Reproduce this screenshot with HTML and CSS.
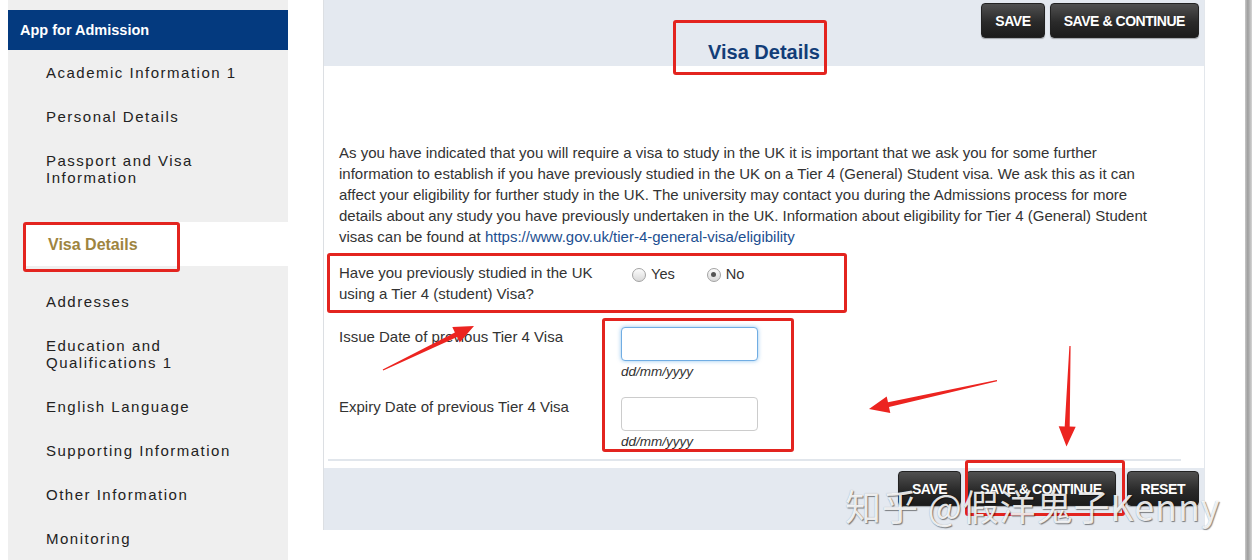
FILE: index.html
```html
<!DOCTYPE html>
<html lang="en">
  <head>
    <meta charset="UTF-8" />
    <meta name="viewport" content="width=device-width, initial-scale=1.0" />
    <title>Visa Details</title>
    <link rel="stylesheet" href="styles.css">
  </head>
  <body>
    <div class="page">
      <aside class="sidebar">
        <div class="sidebar-title">App for Admission</div>
        <ul class="nav">
          <li class="nav-item">Academic Information 1</li>
          <li class="nav-item">Personal Details</li>
          <li class="nav-item">Passport and Visa<br />Information</li>
          <li class="nav-item active">Visa Details</li>
          <li class="nav-item">Addresses</li>
          <li class="nav-item">Education and<br />Qualifications 1</li>
          <li class="nav-item">English Language</li>
          <li class="nav-item">Supporting Information</li>
          <li class="nav-item">Other Information</li>
          <li class="nav-item">Monitoring</li>
        </ul>
      </aside>

      <main class="panel">
        <div class="panel-head">
          <div class="actions">
            <button class="btn">SAVE</button>
            <button class="btn">SAVE &amp; CONTINUE</button>
          </div>
          <h1 class="panel-title">Visa Details</h1>
        </div>

        <div class="panel-body">
          <p class="intro">
            As you have indicated that you will require a visa to study in the UK it is important that we ask you for some further
            information to establish if you have previously studied in the UK on a Tier 4 (General) Student visa. We ask this as it can
            affect your eligibility for further study in the UK. The university may contact you during the Admissions process for more
            details about any study you have previously undertaken in the UK. Information about eligibility for Tier 4 (General) Student
            visas can be found at <a class="link" href="#">https://www.gov.uk/tier-4-general-visa/eligibility</a>
          </p>

          <div class="form-row question">
            <label class="form-label">Have you previously studied in the UK<br />using a Tier 4 (student) Visa?</label>
            <div class="radios">
              <span class="radio-opt"><span class="radio"></span>Yes</span>
              <span class="radio-opt"><span class="radio checked"></span>No</span>
            </div>
          </div>

          <div class="form-row">
            <label class="form-label">Issue Date of previous Tier 4 Visa</label>
            <div class="field">
              <input class="date-input focused" type="text" />
              <div class="hint">dd/mm/yyyy</div>
            </div>
          </div>

          <div class="form-row gap">
            <label class="form-label">Expiry Date of previous Tier 4 Visa</label>
            <div class="field">
              <input class="date-input" type="text" />
              <div class="hint">dd/mm/yyyy</div>
            </div>
          </div>

          <div class="rule"></div>
        </div>

        <div class="panel-foot">
          <button class="btn">SAVE</button>
          <button class="btn">SAVE &amp; CONTINUE</button>
          <button class="btn reset">RESET</button>
        </div>
      </main>

      <div class="edge"></div>
    </div>

    <!-- annotations drawn over the screenshot -->
    <div class="mark mark-nav"></div>
    <div class="mark mark-title"></div>
    <div class="mark mark-question"></div>
    <div class="mark mark-dates"></div>
    <div class="mark mark-continue"></div>

    <svg class="arrows" width="1252" height="560" viewBox="0 0 1252 560">
      <polygon points="383.3,370.5 457.1,337 459.7,342.4 474,326 452.3,327 454.9,332.5 382.7,369.5" />
      <polygon points="996.9,380.1 888,402.3 886.7,396.4 869,409 890.3,413 889,407.1 997.1,381.3" />
      <polygon points="1069.4,346 1064.7,426.4 1058.7,426.2 1066.5,446.5 1075.7,426.8 1069.7,426.6 1070.6,346" />
    </svg>

    <div class="watermark">知乎 @假洋鬼子Kenny</div>
  </body>
</html>
```

FILE: styles.css
```css
body {
  margin: 0;
  width: 1252px;
  height: 560px;
  overflow: hidden;
  position: relative;
  background: #fff;
  font-family: "Liberation Sans", Arial, sans-serif;
  color: #333;
}
.page {
  display: flex;
  align-items: flex-start;
  height: 560px;
}

/* sidebar */
.sidebar {
  margin-left: 8px;
  width: 280px;
  height: 560px;
  background: #efefef;
  padding-top: 10px;
  box-sizing: border-box;
}
.sidebar-title {
  height: 40px;
  line-height: 40px;
  padding-left: 12px;
  background: #043a7f;
  color: #fff;
  font-weight: bold;
  font-size: 14.5px;
}
.nav {
  list-style: none;
  margin: 0;
  padding: 0;
}
.nav-item {
  padding: 13.5px 0 13.5px 38px;
  line-height: 17px;
  font-size: 15px;
  letter-spacing: 1.5px;
  color: #222;
}
.nav-item.active {
  margin: 23px 0 13px 17px;
  padding-left: 23px;
  background: #fff;
  color: #9e8440;
  font-weight: bold;
  font-size: 16px;
  letter-spacing: 0;
}

/* main panel */
.panel {
  margin-left: 35px;
  width: 882px;
  border-left: 1px solid #dcdfe3;
  border-right: 1px solid #e3e7ec;
  box-sizing: border-box;
}
.panel-head {
  height: 66px;
  background: #e4e9f0;
  padding-top: 3px;
  box-sizing: border-box;
}
.actions {
  display: flex;
  justify-content: flex-end;
  gap: 5px;
  padding-right: 5px;
}
.panel-title {
  margin: 2px 0 0;
  text-align: center;
  font-size: 20px;
  line-height: 24px;
  color: #123d78;
}
.btn {
  height: 35px;
  padding: 0 13px;
  border: 1px solid #222;
  border-radius: 4px;
  background: linear-gradient(#505050, #2a2a2a 55%, #1b1b1b);
  color: #fff;
  font-family: "Liberation Sans", Arial, sans-serif;
  font-weight: bold;
  font-size: 14px;
  letter-spacing: -0.45px;
  box-shadow: 0 1px 1px rgba(0, 0, 0, 0.3);
}

.panel-body {
  background: #fff;
  padding: 76px 15px 7px;
}
.intro {
  margin: 0;
  width: 815px;
  font-size: 15px;
  line-height: 21px;
}
.link {
  color: #1d4f91;
  text-decoration: none;
}
.form-row {
  display: grid;
  grid-template-columns: 282px 1fr;
  align-items: start;
  margin-top: 22px;
}
.form-row.question {
  margin-top: 15px;
}
.form-row.gap {
  margin-top: 16px;
}
.form-label {
  font-size: 15px;
  line-height: 21px;
}
.radios {
  display: flex;
  gap: 32px;
  padding-left: 11px;
  margin-top: 5px;
  font-size: 14.6px;
  line-height: 15px;
}
.radio-opt {
  display: flex;
  align-items: center;
  gap: 5px;
}
.radio {
  width: 12px;
  height: 12px;
  border-radius: 50%;
  border: 1px solid #a3a3a3;
  background: linear-gradient(#fcfcfc, #d9d9d9);
  position: relative;
}
.radio.checked::after {
  content: "";
  position: absolute;
  left: 3.5px;
  top: 3.5px;
  width: 5px;
  height: 5px;
  border-radius: 50%;
  background: #555;
}
.field {
  padding-top: 1px;
}
.date-input {
  display: block;
  width: 137px;
  height: 34px;
  box-sizing: border-box;
  border: 1px solid #cccccc;
  border-radius: 4px;
  background: #fff;
  outline: none;
}
.date-input.focused {
  border-color: #71ade3;
  box-shadow: 0 0 4px rgba(102, 175, 233, 0.7);
}
.hint {
  margin-top: 3px;
  font-size: 13.5px;
  line-height: 16px;
  font-style: italic;
}
.rule {
  margin: 9px 0 0 -11px;
  width: 853px;
  height: 2px;
  background: #e1e6ec;
}

.panel-foot {
  height: 62px;
  background: #e4e9f0;
  display: flex;
  justify-content: flex-end;
  align-items: flex-start;
  gap: 5px;
  padding: 3px 5px 0 0;
  box-sizing: border-box;
}
.btn.reset {
  margin-left: 6px;
}

.edge {
  margin-left: auto;
  width: 7px;
  height: 560px;
  background: linear-gradient(to right, #c9c9c9, #9d9d9d 40%, #d6d6d6);
}

/* annotation layer */
.mark {
  position: absolute;
  border: 3px solid #e3241f;
  border-radius: 3px;
  box-sizing: border-box;
}
.mark-nav { left: 23px; top: 222px; width: 157px; height: 50px; }
.mark-title { left: 673px; top: 20px; width: 154px; height: 55px; }
.mark-question { left: 327px; top: 253px; width: 520px; height: 60px; }
.mark-dates { left: 602px; top: 318px; width: 192px; height: 134px; }
.mark-continue { left: 965px; top: 460px; width: 160px; height: 56px; }
.arrows {
  position: absolute;
  left: 0;
  top: 0;
  fill: #ec2420;
}
.watermark {
  position: absolute;
  left: 845px;
  top: 482px;
  font-family: "Noto Sans CJK SC", "Liberation Sans", sans-serif;
  font-size: 36px;
  line-height: 46px;
  letter-spacing: 0.9px;
  color: rgba(255, 255, 255, 0.88);
  text-shadow: 1px 1px 1px rgba(0, 0, 0, 0.45), 0 0 1px rgba(0, 0, 0, 0.3);
  white-space: nowrap;
}
```
